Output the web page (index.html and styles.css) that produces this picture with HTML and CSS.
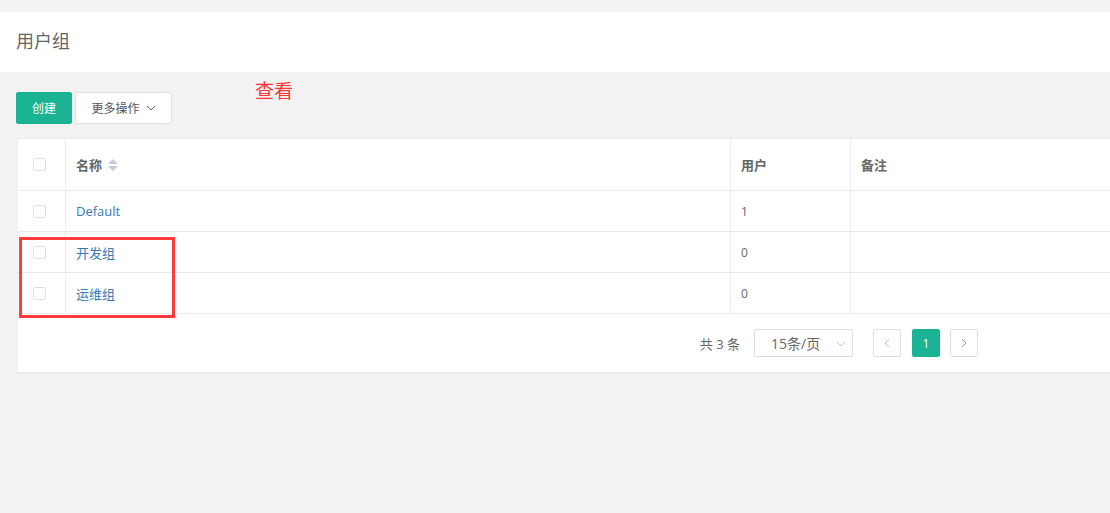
FILE: index.html
```html
<!DOCTYPE html>
<html lang="zh">
<head>
<meta charset="utf-8">
<title>用户组</title>
<link rel="stylesheet" href="styles.css">
</head>
<body>
<div class="page">
  <div class="title-bar">用户组</div>
  <div class="toolbar">
    <button class="btn btn-primary">创建</button>
    <button class="btn btn-default">更多操作 <svg class="caret" width="10" height="6" viewBox="0 0 10 6"><path d="M1 1 L5 5 L9 1" fill="none" stroke="#666" stroke-width="1"/></svg></button>
    <span class="annot">查看</span>
  </div>
  <div class="card">
    <table class="grid">
      <thead>
        <tr>
          <th class="c-check"><span class="checkbox"></span></th>
          <th class="c-name">名称 <span class="sort"><svg width="10" height="12" viewBox="0 0 10 12"><path d="M5 0 L10 5 L0 5 Z" fill="#c6cad3"/><path d="M5 12 L10 7 L0 7 Z" fill="#c6cad3"/></svg></span></th>
          <th class="c-user">用户</th>
          <th class="c-note">备注</th>
        </tr>
      </thead>
      <tbody>
        <tr><td class="c-check"><span class="checkbox"></span></td><td class="c-name"><a class="link">Default</a></td><td class="c-user">1</td><td class="c-note"></td></tr>
        <tr><td class="c-check"><span class="checkbox"></span></td><td class="c-name"><a class="link">开发组</a></td><td class="c-user">0</td><td class="c-note"></td></tr>
        <tr><td class="c-check"><span class="checkbox"></span></td><td class="c-name"><a class="link">运维组</a></td><td class="c-user">0</td><td class="c-note"></td></tr>
      </tbody>
    </table>
    <div class="pager">
      <span class="total">共 3 条</span>
      <div class="select">15条/页 <svg class="sel-caret" width="10" height="6" viewBox="0 0 10 6"><path d="M1 1 L5 5 L9 1" fill="none" stroke="#c0c4cc" stroke-width="1"/></svg></div>
      <span class="pbtn prev"><svg width="6" height="10" viewBox="0 0 6 10"><path d="M5 1 L1 5 L5 9" fill="none" stroke="#c0c4cc" stroke-width="1"/></svg></span>
      <span class="pbtn active">1</span>
      <span class="pbtn next"><svg width="6" height="10" viewBox="0 0 6 10"><path d="M1 1 L5 5 L1 9" fill="none" stroke="#999" stroke-width="1"/></svg></span>
    </div>
  </div>
  <div class="highlight"></div>
</div>
</body>
</html>
```
FILE: styles.css
```css
html, body {
  margin: 0;
  padding: 0;
  background: #f2f2f2;
  overflow: hidden;
}
body {
  font-family: "Open Sans", "Noto Sans CJK SC", sans-serif;
  color: #666;
  font-size: 13px;
}
.page {
  position: relative;
  padding-top: 12px;
  height: 501px;
}
.title-bar {
  background: #fff;
  height: 60px;
  line-height: 58px;
  padding-left: 16px;
  font-size: 18px;
  color: #666;
}
.toolbar {
  display: flex;
  align-items: center;
  padding: 20px 0 0 16px;
  height: 32px;
}
.btn {
  height: 32px;
  border-radius: 2px;
  font-family: inherit;
  font-size: 12px;
  padding: 0;
  cursor: pointer;
  display: inline-flex;
  align-items: center;
  justify-content: center;
}
.btn-primary {
  width: 56px;
  background: #1ab394;
  border: 1px solid #1ab394;
  color: #fff;
}
.btn-default {
  width: 97px;
  margin-left: 3px;
  background: #fff;
  border: 1px solid #dcdfe6;
  color: #555;
}
.caret {
  margin-left: 6px;
}
.annot {
  margin-left: 83px;
  margin-top: -37px;
  color: #ff3333;
  font-size: 19px;
}
.card {
  margin: 14px -20px 0 17px;
  background: #fff;
  border-top: 1px solid #e9ecf1;
  border-bottom: 2px solid #e8ebf0;
  border-left: 1px solid #eceef3;
}
.grid {
  width: 1112px;
  border-collapse: collapse;
  table-layout: fixed;
}
.grid th, .grid td {
  text-align: left;
  padding: 0 10px;
  border-bottom: 1px solid #e8e9ee;
  border-right: 1px solid #ebecf2;
}
.grid th {
  height: 51px;
  font-weight: bold;
  font-size: 13px;
  color: #666;
}
.grid td {
  height: 40px;
  font-size: 12px;
  color: #666;
}
.c-check {
  text-align: left !important;
  padding: 0 0 0 15px !important;
}
.grid th.c-check { width: 32px; }
.c-name { width: 644px; }
.c-user { width: 99px; }
.c-note { border-right: none !important; }
.checkbox {
  display: block;
  width: 11px;
  height: 11px;
  border: 1px solid #dcdfe6;
  border-radius: 2px;
  background: #fff;
}
.sort {
  display: inline-block;
  vertical-align: middle;
  margin-left: 3px;
  margin-top: -3px;
}
.sort svg { display: block; }
.link {
  color: #337ab7;
  font-size: 13px;
}
.pager {
  height: 58px;
  display: flex;
  align-items: center;
  justify-content: flex-end;
  padding-right: 152px;
}
.total {
  font-size: 13px;
  color: #666;
  margin-right: 14px;
}
.select {
  height: 26px;
  border: 1px solid #dcdfe6;
  border-radius: 2px;
  display: flex;
  align-items: center;
  padding-left: 16px;
  box-sizing: content-box;
  width: 81px;
  font-size: 14px;
  color: #666;
  position: relative;
  margin-right: 20px;
}
.sel-caret {
  position: absolute;
  right: 6px;
  top: 11px;
}
.pbtn {
  width: 26px;
  height: 26px;
  border: 1px solid #dcdfe6;
  border-radius: 2px;
  display: flex;
  align-items: center;
  justify-content: center;
  background: #fff;
  font-size: 12px;
}
.pbtn.active {
  background: #1ab394;
  border-color: #1ab394;
  color: #fff;
  margin: 0 10px 0 11px;
}
.highlight {
  position: absolute;
  left: 19px;
  top: 237px;
  width: 150px;
  height: 75px;
  border: 3px solid #ff3b3b;
}
```
